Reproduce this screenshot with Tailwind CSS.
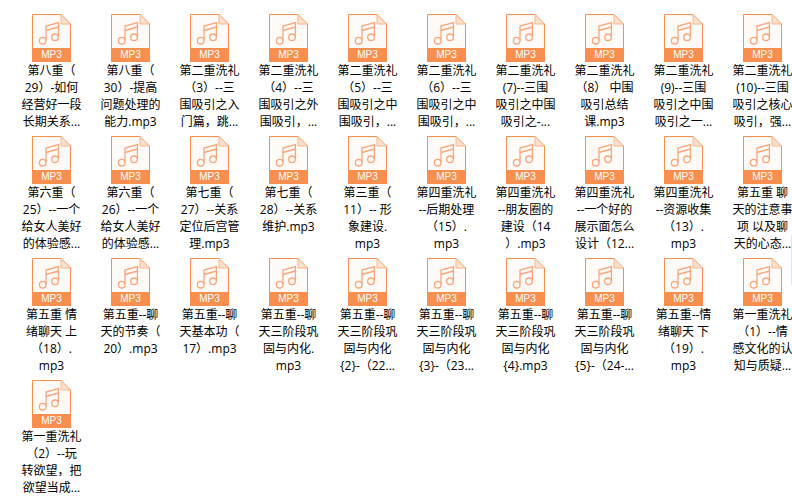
<!doctype html>
<html lang="zh-CN">
<head>
<meta charset="utf-8">
<script src="https://cdn.jsdelivr.net/npm/@tailwindcss/browser@4"></script>
</head>
<body class="bg-white">
<svg width="0" height="0" class="absolute">
  <symbol id="mp3" viewBox="0 0 39 48">
    <path d="M.5.5H29L38.5 10V47.5H.5Z" fill="#fefaf7" stroke="#f98f4f"/>
    <path d="M29 .5V10H38.5Z" fill="#fde0cd" stroke="#fbb58a"/>
    <rect x="0" y="34" width="39" height="14" fill="#f98f4f"/>
    <g fill="none" stroke="#fba67a" stroke-width="1.3">
      <circle cx="10.7" cy="26.7" r="3.3"/>
      <circle cx="23" cy="23.3" r="3.3"/>
      <path d="M14 26.5V12L26.4 8.5V23"/>
      <path d="M14 16.5L26.4 13"/>
    </g>
  </symbol>
</svg>
<main class="relative w-[792px] h-[502px] overflow-hidden pl-3 pt-[14px] grid grid-cols-[repeat(10,79px)] auto-rows-[122px] text-black text-xs leading-[17px] text-center [text-spacing-trim:space-all] font-['Open_Sans','Noto_Sans_CJK_SC',sans-serif]">
  <!-- row 1 -->
  <div class="flex flex-col items-center"><div class="relative w-[39px] h-12"><svg class="w-[39px] h-12" ><use href="#mp3"/></svg><span class="absolute left-0 right-0 bottom-[1px] text-white text-[10px] leading-[12px] font-['Liberation_Sans']">MP3</span></div><p class="whitespace-nowrap">第八重（<br>29）-如何<br>经营好一段<br>长期关系...</p></div>
  <div class="flex flex-col items-center"><div class="relative w-[39px] h-12"><svg class="w-[39px] h-12" ><use href="#mp3"/></svg><span class="absolute left-0 right-0 bottom-[1px] text-white text-[10px] leading-[12px] font-['Liberation_Sans']">MP3</span></div><p class="whitespace-nowrap">第八重（<br>30）-提高<br>问题处理的<br>能力.mp3</p></div>
  <div class="flex flex-col items-center"><div class="relative w-[39px] h-12"><svg class="w-[39px] h-12" ><use href="#mp3"/></svg><span class="absolute left-0 right-0 bottom-[1px] text-white text-[10px] leading-[12px] font-['Liberation_Sans']">MP3</span></div><p class="whitespace-nowrap">第二重洗礼<br>（3）--三<br>围吸引之入<br>门篇，跳...</p></div>
  <div class="flex flex-col items-center"><div class="relative w-[39px] h-12"><svg class="w-[39px] h-12" ><use href="#mp3"/></svg><span class="absolute left-0 right-0 bottom-[1px] text-white text-[10px] leading-[12px] font-['Liberation_Sans']">MP3</span></div><p class="whitespace-nowrap">第二重洗礼<br>（4）--三<br>围吸引之外<br>围吸引，...</p></div>
  <div class="flex flex-col items-center"><div class="relative w-[39px] h-12"><svg class="w-[39px] h-12" ><use href="#mp3"/></svg><span class="absolute left-0 right-0 bottom-[1px] text-white text-[10px] leading-[12px] font-['Liberation_Sans']">MP3</span></div><p class="whitespace-nowrap">第二重洗礼<br>（5）--三<br>围吸引之中<br>围吸引，...</p></div>
  <div class="flex flex-col items-center"><div class="relative w-[39px] h-12"><svg class="w-[39px] h-12" ><use href="#mp3"/></svg><span class="absolute left-0 right-0 bottom-[1px] text-white text-[10px] leading-[12px] font-['Liberation_Sans']">MP3</span></div><p class="whitespace-nowrap">第二重洗礼<br>（6）--三<br>围吸引之中<br>围吸引，...</p></div>
  <div class="flex flex-col items-center"><div class="relative w-[39px] h-12"><svg class="w-[39px] h-12" ><use href="#mp3"/></svg><span class="absolute left-0 right-0 bottom-[1px] text-white text-[10px] leading-[12px] font-['Liberation_Sans']">MP3</span></div><p class="whitespace-nowrap">第二重洗礼<br>(7)--三围<br>吸引之中围<br>吸引之-...</p></div>
  <div class="flex flex-col items-center"><div class="relative w-[39px] h-12"><svg class="w-[39px] h-12" ><use href="#mp3"/></svg><span class="absolute left-0 right-0 bottom-[1px] text-white text-[10px] leading-[12px] font-['Liberation_Sans']">MP3</span></div><p class="whitespace-nowrap">第二重洗礼<br>（8） 中围<br>吸引总结<br>课.mp3</p></div>
  <div class="flex flex-col items-center"><div class="relative w-[39px] h-12"><svg class="w-[39px] h-12" ><use href="#mp3"/></svg><span class="absolute left-0 right-0 bottom-[1px] text-white text-[10px] leading-[12px] font-['Liberation_Sans']">MP3</span></div><p class="whitespace-nowrap">第二重洗礼<br>(9)--三围<br>吸引之中围<br>吸引之一...</p></div>
  <div class="flex flex-col items-center"><div class="relative w-[39px] h-12"><svg class="w-[39px] h-12" ><use href="#mp3"/></svg><span class="absolute left-0 right-0 bottom-[1px] text-white text-[10px] leading-[12px] font-['Liberation_Sans']">MP3</span></div><p class="whitespace-nowrap">第二重洗礼<br>(10)--三围<br>吸引之核心<br>吸引，强...</p></div>
  <!-- row 2 -->
  <div class="flex flex-col items-center"><div class="relative w-[39px] h-12"><svg class="w-[39px] h-12" ><use href="#mp3"/></svg><span class="absolute left-0 right-0 bottom-[1px] text-white text-[10px] leading-[12px] font-['Liberation_Sans']">MP3</span></div><p class="whitespace-nowrap">第六重（<br>25）--一个<br>给女人美好<br>的体验感...</p></div>
  <div class="flex flex-col items-center"><div class="relative w-[39px] h-12"><svg class="w-[39px] h-12" ><use href="#mp3"/></svg><span class="absolute left-0 right-0 bottom-[1px] text-white text-[10px] leading-[12px] font-['Liberation_Sans']">MP3</span></div><p class="whitespace-nowrap">第六重（<br>26）--一个<br>给女人美好<br>的体验感...</p></div>
  <div class="flex flex-col items-center"><div class="relative w-[39px] h-12"><svg class="w-[39px] h-12" ><use href="#mp3"/></svg><span class="absolute left-0 right-0 bottom-[1px] text-white text-[10px] leading-[12px] font-['Liberation_Sans']">MP3</span></div><p class="whitespace-nowrap">第七重（<br>27）--关系<br>定位后宫管<br>理.mp3</p></div>
  <div class="flex flex-col items-center"><div class="relative w-[39px] h-12"><svg class="w-[39px] h-12" ><use href="#mp3"/></svg><span class="absolute left-0 right-0 bottom-[1px] text-white text-[10px] leading-[12px] font-['Liberation_Sans']">MP3</span></div><p class="whitespace-nowrap">第七重（<br>28）--关系<br>维护.mp3</p></div>
  <div class="flex flex-col items-center"><div class="relative w-[39px] h-12"><svg class="w-[39px] h-12" ><use href="#mp3"/></svg><span class="absolute left-0 right-0 bottom-[1px] text-white text-[10px] leading-[12px] font-['Liberation_Sans']">MP3</span></div><p class="whitespace-nowrap">第三重（<br>11）-- 形<br>象建设.<br>mp3</p></div>
  <div class="flex flex-col items-center"><div class="relative w-[39px] h-12"><svg class="w-[39px] h-12" ><use href="#mp3"/></svg><span class="absolute left-0 right-0 bottom-[1px] text-white text-[10px] leading-[12px] font-['Liberation_Sans']">MP3</span></div><p class="whitespace-nowrap">第四重洗礼<br>--后期处理<br>（15）.<br>mp3</p></div>
  <div class="flex flex-col items-center"><div class="relative w-[39px] h-12"><svg class="w-[39px] h-12" ><use href="#mp3"/></svg><span class="absolute left-0 right-0 bottom-[1px] text-white text-[10px] leading-[12px] font-['Liberation_Sans']">MP3</span></div><p class="whitespace-nowrap">第四重洗礼<br>--朋友圈的<br>建设（14<br>）.mp3</p></div>
  <div class="flex flex-col items-center"><div class="relative w-[39px] h-12"><svg class="w-[39px] h-12" ><use href="#mp3"/></svg><span class="absolute left-0 right-0 bottom-[1px] text-white text-[10px] leading-[12px] font-['Liberation_Sans']">MP3</span></div><p class="whitespace-nowrap">第四重洗礼<br>--一个好的<br>展示面怎么<br>设计（12...</p></div>
  <div class="flex flex-col items-center"><div class="relative w-[39px] h-12"><svg class="w-[39px] h-12" ><use href="#mp3"/></svg><span class="absolute left-0 right-0 bottom-[1px] text-white text-[10px] leading-[12px] font-['Liberation_Sans']">MP3</span></div><p class="whitespace-nowrap">第四重洗礼<br>--资源收集<br>（13）.<br>mp3</p></div>
  <div class="flex flex-col items-center"><div class="relative w-[39px] h-12"><svg class="w-[39px] h-12" ><use href="#mp3"/></svg><span class="absolute left-0 right-0 bottom-[1px] text-white text-[10px] leading-[12px] font-['Liberation_Sans']">MP3</span></div><p class="whitespace-nowrap">第五重 聊<br>天的注意事<br>项 以及聊<br>天的心态...</p></div>
  <!-- row 3 -->
  <div class="flex flex-col items-center"><div class="relative w-[39px] h-12"><svg class="w-[39px] h-12" ><use href="#mp3"/></svg><span class="absolute left-0 right-0 bottom-[1px] text-white text-[10px] leading-[12px] font-['Liberation_Sans']">MP3</span></div><p class="whitespace-nowrap">第五重 情<br>绪聊天 上<br>（18）.<br>mp3</p></div>
  <div class="flex flex-col items-center"><div class="relative w-[39px] h-12"><svg class="w-[39px] h-12" ><use href="#mp3"/></svg><span class="absolute left-0 right-0 bottom-[1px] text-white text-[10px] leading-[12px] font-['Liberation_Sans']">MP3</span></div><p class="whitespace-nowrap">第五重--聊<br>天的节奏（<br>20）.mp3</p></div>
  <div class="flex flex-col items-center"><div class="relative w-[39px] h-12"><svg class="w-[39px] h-12" ><use href="#mp3"/></svg><span class="absolute left-0 right-0 bottom-[1px] text-white text-[10px] leading-[12px] font-['Liberation_Sans']">MP3</span></div><p class="whitespace-nowrap">第五重--聊<br>天基本功（<br>17）.mp3</p></div>
  <div class="flex flex-col items-center"><div class="relative w-[39px] h-12"><svg class="w-[39px] h-12" ><use href="#mp3"/></svg><span class="absolute left-0 right-0 bottom-[1px] text-white text-[10px] leading-[12px] font-['Liberation_Sans']">MP3</span></div><p class="whitespace-nowrap">第五重--聊<br>天三阶段巩<br>固与内化.<br>mp3</p></div>
  <div class="flex flex-col items-center"><div class="relative w-[39px] h-12"><svg class="w-[39px] h-12" ><use href="#mp3"/></svg><span class="absolute left-0 right-0 bottom-[1px] text-white text-[10px] leading-[12px] font-['Liberation_Sans']">MP3</span></div><p class="whitespace-nowrap">第五重--聊<br>天三阶段巩<br>固与内化<br>{2}-（22...</p></div>
  <div class="flex flex-col items-center"><div class="relative w-[39px] h-12"><svg class="w-[39px] h-12" ><use href="#mp3"/></svg><span class="absolute left-0 right-0 bottom-[1px] text-white text-[10px] leading-[12px] font-['Liberation_Sans']">MP3</span></div><p class="whitespace-nowrap">第五重--聊<br>天三阶段巩<br>固与内化<br>{3}-（23...</p></div>
  <div class="flex flex-col items-center"><div class="relative w-[39px] h-12"><svg class="w-[39px] h-12" ><use href="#mp3"/></svg><span class="absolute left-0 right-0 bottom-[1px] text-white text-[10px] leading-[12px] font-['Liberation_Sans']">MP3</span></div><p class="whitespace-nowrap">第五重--聊<br>天三阶段巩<br>固与内化<br>{4}.mp3</p></div>
  <div class="flex flex-col items-center"><div class="relative w-[39px] h-12"><svg class="w-[39px] h-12" ><use href="#mp3"/></svg><span class="absolute left-0 right-0 bottom-[1px] text-white text-[10px] leading-[12px] font-['Liberation_Sans']">MP3</span></div><p class="whitespace-nowrap">第五重--聊<br>天三阶段巩<br>固与内化<br>{5}-（24-...</p></div>
  <div class="flex flex-col items-center"><div class="relative w-[39px] h-12"><svg class="w-[39px] h-12" ><use href="#mp3"/></svg><span class="absolute left-0 right-0 bottom-[1px] text-white text-[10px] leading-[12px] font-['Liberation_Sans']">MP3</span></div><p class="whitespace-nowrap">第五重--情<br>绪聊天 下<br>（19）.<br>mp3</p></div>
  <div class="flex flex-col items-center"><div class="relative w-[39px] h-12"><svg class="w-[39px] h-12" ><use href="#mp3"/></svg><span class="absolute left-0 right-0 bottom-[1px] text-white text-[10px] leading-[12px] font-['Liberation_Sans']">MP3</span></div><p class="whitespace-nowrap">第一重洗礼<br>（1）--情<br>感文化的认<br>知与质疑...</p></div>
  <!-- row 4 -->
  <div class="flex flex-col items-center"><div class="relative w-[39px] h-12"><svg class="w-[39px] h-12" ><use href="#mp3"/></svg><span class="absolute left-0 right-0 bottom-[1px] text-white text-[10px] leading-[12px] font-['Liberation_Sans']">MP3</span></div><p class="whitespace-nowrap">第一重洗礼<br>（2）--玩<br>转欲望，把<br>欲望当成...</p></div>
  <div class="absolute right-0 top-[235px] w-px h-[50px] bg-[#dce6f2]"></div>
</main>
</body>
</html>
